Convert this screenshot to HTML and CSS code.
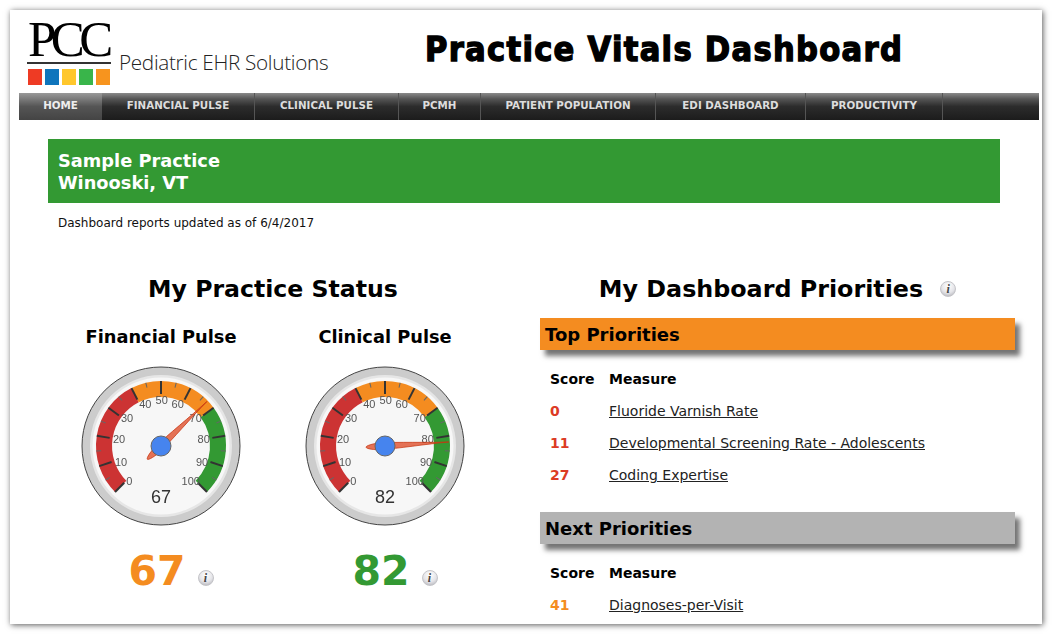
FILE: index.html
```html
<!DOCTYPE html>
<html lang="en">
<head>
<meta charset="utf-8">
<title>Practice Vitals Dashboard</title>
<link rel="stylesheet" href="styles.css">
</head>
<body>
<svg class="defs" width="0" height="0" aria-hidden="true">
  <defs>
    <g id="dial">
      <circle r="79" fill="#ccc" stroke="#444" stroke-width="1"/>
      <circle r="71" fill="#e6e6e6"/>
      <circle r="68.5" fill="#f7f7f7"/>
      <path d="M-40.31 40.31A57 57 0 0 1-25.88-50.79" class="band" stroke="#cc3333"/>
      <path d="M-25.88-50.79A57 57 0 0 1 46.11-33.5" class="band" stroke="#f48c20"/>
      <path d="M46.11-33.5A57 57 0 0 1 40.31 40.31" class="band" stroke="#339933"/>
      <g class="minor">
        <path d="M0-65V-60" transform="rotate(-121.5)"/><path d="M0-65V-60" transform="rotate(-94.5)"/>
        <path d="M0-65V-60" transform="rotate(-67.5)"/><path d="M0-65V-60" transform="rotate(-40.5)"/>
        <path d="M0-65V-60" transform="rotate(-13.5)"/><path d="M0-65V-60" transform="rotate(13.5)"/>
        <path d="M0-65V-60" transform="rotate(40.5)"/><path d="M0-65V-60" transform="rotate(67.5)"/>
        <path d="M0-65V-60" transform="rotate(94.5)"/><path d="M0-65V-60" transform="rotate(121.5)"/>
      </g>
      <g class="major">
        <path d="M0-65V-52" transform="rotate(-135)"/><path d="M0-65V-52" transform="rotate(-108)"/>
        <path d="M0-65V-52" transform="rotate(-81)"/><path d="M0-65V-52" transform="rotate(-54)"/>
        <path d="M0-65V-52" transform="rotate(-27)"/><path d="M0-65V-52"/>
        <path d="M0-65V-52" transform="rotate(27)"/><path d="M0-65V-52" transform="rotate(54)"/>
        <path d="M0-65V-52" transform="rotate(81)"/><path d="M0-65V-52" transform="rotate(108)"/>
        <path d="M0-65V-52" transform="rotate(135)"/>
      </g>
      <g class="labels">
        <text x="-31.7" y="38.7">0</text><text x="-40" y="19.7">10</text><text x="-42" y="-3.3">20</text>
        <text x="-34" y="-24.3">30</text><text x="-15.7" y="-38.3">40</text><text x="0.7" y="-42.3">50</text>
        <text x="16.7" y="-38.3">60</text><text x="34.7" y="-24.3">70</text><text x="42.7" y="-3.3">80</text>
        <text x="41" y="19.7">90</text><text x="29.7" y="38.7">100</text>
      </g>
    </g>
    <g id="hub"><circle r="10" fill="#4684ee" stroke="#666" stroke-width="1"/></g>
    <path id="needle" d="M0-64C.6-42 3.4-12 3.4 4C3.4 11 1.6 19 0 19C-1.6 19-3.4 11-3.4 4C-3.4-12-.6-42 0-64Z"/>
  </defs>
</svg>
<div class="window">
  <header class="masthead">
    <div class="logo">
      <div class="logo-mark">
        <div class="logo-pcc">PCC</div>
        <div class="logo-rule"></div>
        <div class="logo-squares">
          <span class="sq sq-red"></span><span class="sq sq-blue"></span><span class="sq sq-yellow"></span><span class="sq sq-green"></span><span class="sq sq-orange"></span>
        </div>
      </div>
      <div class="logo-tag">Pediatric EHR Solutions</div>
    </div>
    <h1 class="app-title">Practice Vitals Dashboard</h1>
  </header>
  <nav class="nav">
    <a class="nav-item nav-active nav-home">HOME</a>
    <a class="nav-item nav-fin">FINANCIAL PULSE</a>
    <a class="nav-item nav-cli">CLINICAL PULSE</a>
    <a class="nav-item nav-pcmh">PCMH</a>
    <a class="nav-item nav-pop">PATIENT POPULATION</a>
    <a class="nav-item nav-edi">EDI DASHBOARD</a>
    <a class="nav-item nav-prod">PRODUCTIVITY</a>
  </nav>
  <section class="banner">
    <div>Sample Practice</div>
    <div>Winooski, VT</div>
  </section>
  <p class="updated">Dashboard reports updated as of 6/4/2017</p>
  <main class="main">
    <section class="status">
      <h2 class="section-title">My Practice Status</h2>
      <div class="gauges">
        <div class="gauge">
          <h3 class="gauge-title">Financial Pulse</h3>
          <svg class="dial" viewBox="-80 -80 160 160" width="160" height="160">
            <use href="#dial"/>
            <text class="dial-value" x="0" y="57">67</text>
            <use href="#needle" class="needle" transform="rotate(45.9)"/>
            <use href="#hub"/>
          </svg>
          <div class="score-row"><span class="score-big orange">67</span><span class="info">i</span></div>
        </div>
        <div class="gauge">
          <h3 class="gauge-title">Clinical Pulse</h3>
          <svg class="dial" viewBox="-80 -80 160 160" width="160" height="160">
            <use href="#dial"/>
            <text class="dial-value" x="0" y="57">82</text>
            <use href="#needle" class="needle" transform="rotate(86.4)"/>
            <use href="#hub"/>
          </svg>
          <div class="score-row"><span class="score-big green">82</span><span class="info">i</span></div>
        </div>
      </div>
    </section>
    <section class="priorities">
      <h2 class="section-title priorities-title">My Dashboard Priorities <span class="info">i</span></h2>
      <div class="bar bar-top">Top Priorities</div>
      <div class="rows">
        <div class="head">Score</div><div class="head">Measure</div>
        <div class="val red">0</div><div><a class="measure">Fluoride Varnish Rate</a></div>
        <div class="val red">11</div><div><a class="measure">Developmental Screening Rate - Adolescents</a></div>
        <div class="val red">27</div><div><a class="measure">Coding Expertise</a></div>
      </div>
      <div class="bar bar-next">Next Priorities</div>
      <div class="rows">
        <div class="head">Score</div><div class="head">Measure</div>
        <div class="val orange">41</div><div><a class="measure">Diagnoses-per-Visit</a></div>
      </div>
    </section>
  </main>
</div>
</body>
</html>
```
FILE: styles.css
```css
* { box-sizing: border-box; }
html, body { margin: 0; padding: 0; height: 100%; overflow: hidden; background: #fff; }
body { font-family: "DejaVu Sans", Verdana, sans-serif; color: #000; }
.defs { display: block; height: 0; }

.window {
  margin: 10px 0 0 10px;
  width: 1032px;
  height: 614px;
  background: #fff;
  overflow: hidden;
  box-shadow: 1px 1px 6px rgba(0, 0, 0, .65);
}

.masthead { display: flex; height: 83px; padding: 12px 0 0 17px; }
.logo { display: flex; width: 398px; }
.logo-mark { width: 84px; }
.logo-pcc {
  font: 51px/40px "Liberation Serif", serif;
  letter-spacing: -5.6px;
  height: 40px;
  margin: -3px 0 3px 1px;
}
.logo-rule { height: 2px; background: #333; }
.logo-squares { display: flex; gap: 3px; margin: 5px 0 0 1px; }
.sq { width: 14px; height: 16px; }
.sq-red { background: #ee3b24; }
.sq-blue { background: #0f75bc; }
.sq-yellow { background: #ffc72c; }
.sq-green { background: #39b54a; }
.sq-orange { background: #f7941e; }
.logo-tag {
  font: 300 20.7px/24px "Open Sans", sans-serif;
  margin: 28px 0 0 8px;
  letter-spacing: -.3px;
  white-space: nowrap;
  color: #222;
}
.app-title {
  margin: 7px 0 0;
  font: 700 34px/40px "DejaVu Sans Condensed", "DejaVu Sans", sans-serif;
  font-stretch: condensed;
  -webkit-text-stroke: 1.3px #000;
  letter-spacing: 1.3px;
  white-space: nowrap;
}

.nav {
  display: flex;
  margin-left: 9px;
  width: 1020px;
  height: 27px;
  background: linear-gradient(#8a8a8a 0, #555 22%, #2c2c2c 50%, #1c1c1c 100%);
}
.nav-item {
  display: block;
  font: 700 10.3px/25px "DejaVu Sans", sans-serif;
  color: #ddd;
  text-align: center;
  white-space: nowrap;
  border-right: 1px solid #555;
}
.nav-home { width: 83px; }
.nav-fin { width: 153px; }
.nav-cli { width: 144px; }
.nav-pcmh { width: 82px; }
.nav-pop { width: 175px; }
.nav-edi { width: 150px; }
.nav-prod { width: 137px; }
.nav-active { color: #eee; background: linear-gradient(#999 0, #777 25%, #555 50%, #444 100%); border-right: 0; }

.banner {
  margin: 19px 0 0 38px;
  width: 952px;
  height: 64px;
  padding: 11px 10px;
  background: #339933;
  color: #fff;
  font-weight: 700;
  font-size: 17.8px;
  line-height: 22px;
}
.updated { margin: 9px 0 0 48px; font-size: 12px; line-height: 22px; color: #111; }

.main { display: grid; grid-template-columns: 448px 475px; column-gap: 43px; margin: 36px 0 0 39px; }
.section-title { margin: 0; padding-top: 1px; font-size: 23.6px; line-height: 36px; height: 36px; font-weight: 700; text-align: center; white-space: nowrap; }
.gauges { display: flex; }
.gauge { width: 224px; display: flex; flex-direction: column; align-items: center; }
.gauge-title { margin: 18px 0 0; padding-top: 1px; font-size: 17.8px; line-height: 24px; height: 24px; font-weight: 700; }
.dial { display: block; margin-top: 18px; will-change: transform; }
.band { fill: none; stroke-width: 16; }
.minor path { stroke: #666; stroke-width: 1; fill: none; }
.major path { stroke: #333; stroke-width: 2; fill: none; }
.labels text { font: 11px "Liberation Sans", sans-serif; fill: #555; text-anchor: middle; }
.dial-value { font: 18px "Liberation Sans", sans-serif; fill: #333; text-anchor: middle; }
.needle { fill: rgba(222, 80, 45, .8); stroke: #c63310; stroke-width: .7; }

.score-row { display: flex; align-items: center; gap: 12px; margin-top: 21px; padding-left: 20px; height: 48px; }
.score-big { font-size: 41px; line-height: 48px; font-weight: 700; }
.score-row .info { margin-top: 14px; }
.orange { color: #f48c20; }
.green { color: #339933; }
.red { color: #dc3b24; }

.info {
  display: inline-flex;
  align-items: center;
  justify-content: center;
  width: 16px;
  height: 16px;
  border-radius: 50%;
  border: 1px solid #c4c4c8;
  background: radial-gradient(circle at 50% 30%, #fff 0, #e4e4e8 55%, #a8a8ae 100%);
  color: #444;
  font: italic 700 12px/1 "Liberation Serif", serif;
  letter-spacing: 0;
}
.priorities-title { display: flex; justify-content: center; align-items: center; gap: 17px; font-size: 23.8px; }

.bar {
  height: 32px;
  padding-left: 5px;
  font-size: 18px;
  line-height: 33px;
  font-weight: 700;
  box-shadow: 5px 6px 5px rgba(0, 0, 0, .55);
}
.bar-top { margin-top: 12px; background: #f48c20; }
.bar-next { margin-top: 21px; background: #b3b3b3; }
.rows {
  display: grid;
  grid-template-columns: 59px 1fr;
  grid-auto-rows: 32px;
  align-items: center;
  margin-top: 13px;
  padding-left: 10px;
  font-size: 14px;
}
.head { font-weight: 700; }
.val { font-weight: 700; }
.measure { color: #222; text-decoration: underline; white-space: nowrap; }
```
